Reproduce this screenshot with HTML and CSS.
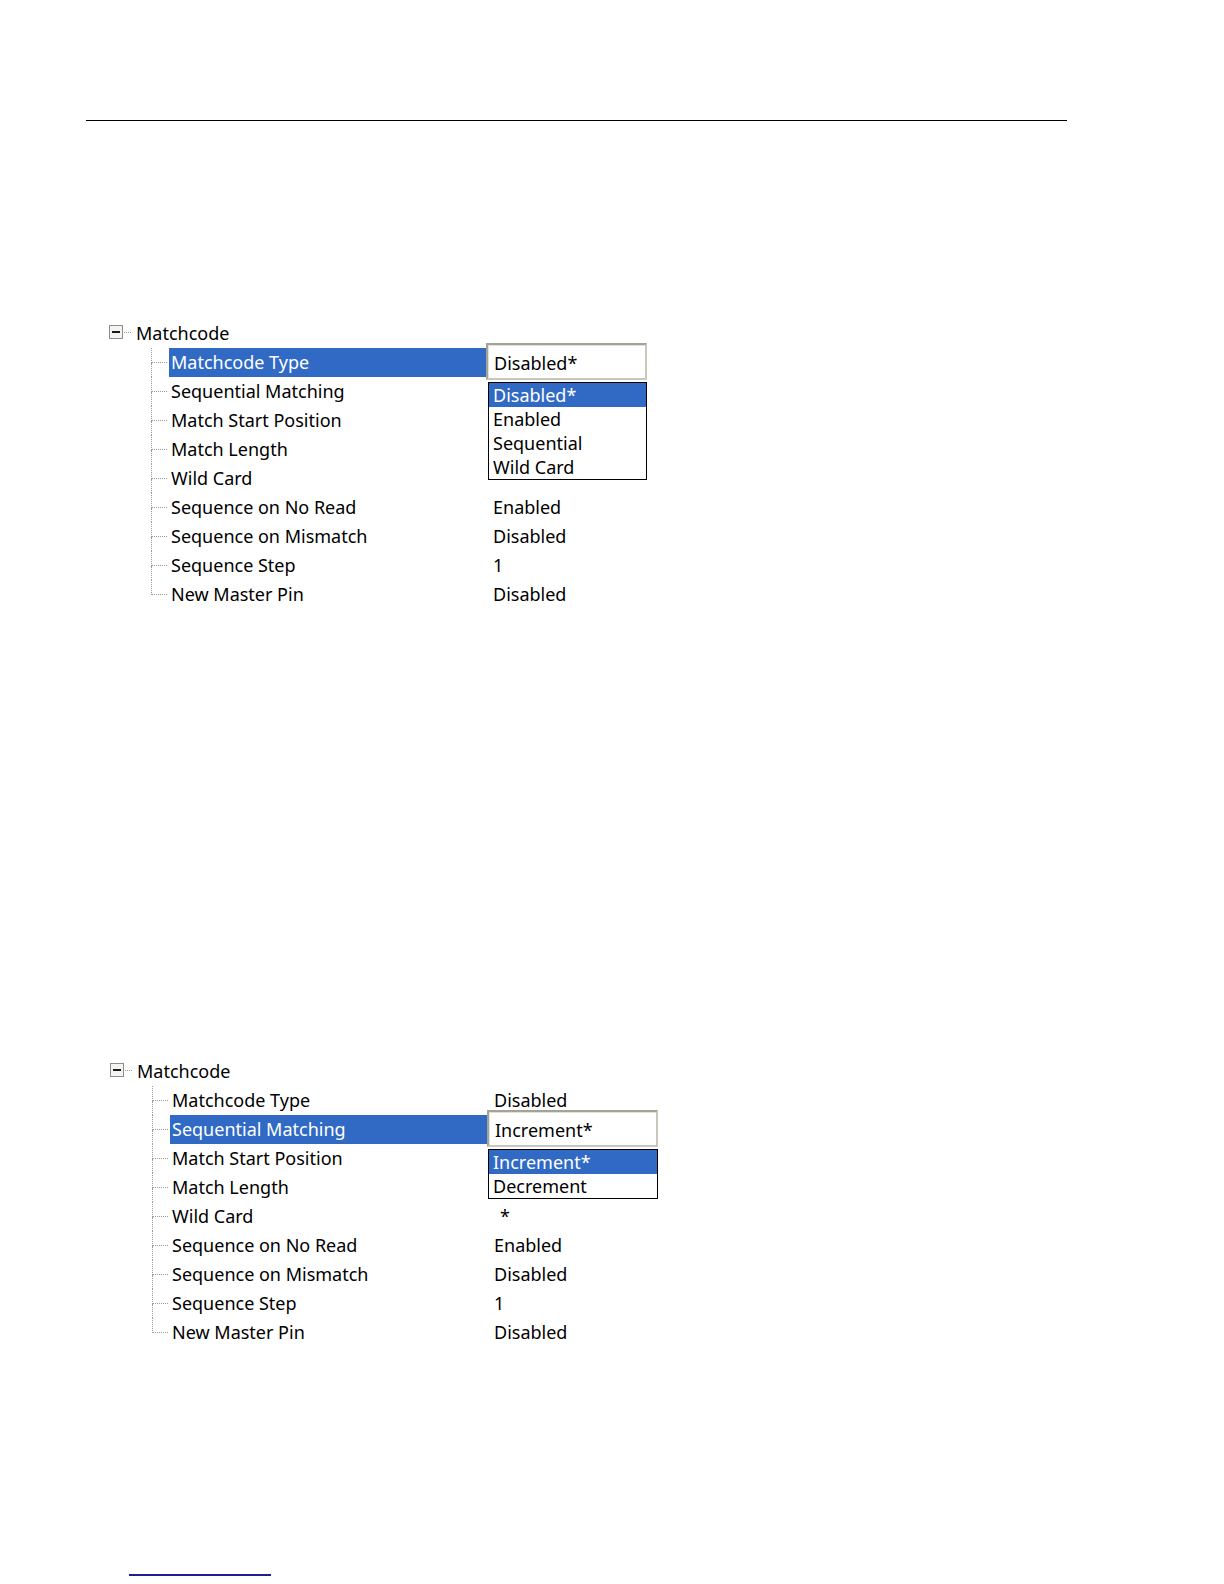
FILE: index.html
```html
<!DOCTYPE html>
<html lang="en">
<head>
<meta charset="utf-8">
<title>Matchcode</title>
<link rel="stylesheet" href="styles.css">
</head>
<body>
<div class="rule"></div>

<div class="tree tree-a">
  <div class="root">
    <div class="toggle"><div class="minus"></div></div>
    <div class="stub"></div>
    <div class="root-label">Matchcode</div>
  </div>
  <div class="row">
    <div class="branch"><div class="b-top"></div><div class="b-bot"></div></div>
    <div class="label selected">Matchcode Type</div>
    <div class="value">
      <div class="combo">Disabled*</div>
      <ul class="list">
        <li class="sel">Disabled*</li>
        <li>Enabled</li>
        <li>Sequential</li>
        <li>Wild Card</li>
      </ul>
    </div>
  </div>
  <div class="row">
    <div class="branch"><div class="b-top"></div><div class="b-bot"></div></div>
    <div class="label">Sequential Matching</div>
    <div class="value"></div>
  </div>
  <div class="row">
    <div class="branch"><div class="b-top"></div><div class="b-bot"></div></div>
    <div class="label">Match Start Position</div>
    <div class="value"></div>
  </div>
  <div class="row">
    <div class="branch"><div class="b-top"></div><div class="b-bot"></div></div>
    <div class="label">Match Length</div>
    <div class="value"></div>
  </div>
  <div class="row">
    <div class="branch"><div class="b-top"></div><div class="b-bot"></div></div>
    <div class="label">Wild Card</div>
    <div class="value"></div>
  </div>
  <div class="row">
    <div class="branch"><div class="b-top"></div><div class="b-bot"></div></div>
    <div class="label">Sequence on No Read</div>
    <div class="value">Enabled</div>
  </div>
  <div class="row">
    <div class="branch"><div class="b-top"></div><div class="b-bot"></div></div>
    <div class="label">Sequence on Mismatch</div>
    <div class="value">Disabled</div>
  </div>
  <div class="row">
    <div class="branch"><div class="b-top"></div><div class="b-bot"></div></div>
    <div class="label">Sequence Step</div>
    <div class="value">1</div>
  </div>
  <div class="row last">
    <div class="branch"><div class="b-top"></div><div class="b-bot"></div></div>
    <div class="label">New Master Pin</div>
    <div class="value">Disabled</div>
  </div>
</div>

<div class="tree tree-b">
  <div class="root">
    <div class="toggle"><div class="minus"></div></div>
    <div class="stub"></div>
    <div class="root-label">Matchcode</div>
  </div>
  <div class="row">
    <div class="branch"><div class="b-top"></div><div class="b-bot"></div></div>
    <div class="label">Matchcode Type</div>
    <div class="value">Disabled</div>
  </div>
  <div class="row">
    <div class="branch"><div class="b-top"></div><div class="b-bot"></div></div>
    <div class="label selected">Sequential Matching</div>
    <div class="value">
      <div class="combo combo-wide">Increment*</div>
      <ul class="list list-wide">
        <li class="sel">Increment*</li>
        <li>Decrement</li>
      </ul>
    </div>
  </div>
  <div class="row">
    <div class="branch"><div class="b-top"></div><div class="b-bot"></div></div>
    <div class="label">Match Start Position</div>
    <div class="value"></div>
  </div>
  <div class="row">
    <div class="branch"><div class="b-top"></div><div class="b-bot"></div></div>
    <div class="label">Match Length</div>
    <div class="value"></div>
  </div>
  <div class="row">
    <div class="branch"><div class="b-top"></div><div class="b-bot"></div></div>
    <div class="label">Wild Card</div>
    <div class="value value-star">*</div>
  </div>
  <div class="row">
    <div class="branch"><div class="b-top"></div><div class="b-bot"></div></div>
    <div class="label">Sequence on No Read</div>
    <div class="value">Enabled</div>
  </div>
  <div class="row">
    <div class="branch"><div class="b-top"></div><div class="b-bot"></div></div>
    <div class="label">Sequence on Mismatch</div>
    <div class="value">Disabled</div>
  </div>
  <div class="row">
    <div class="branch"><div class="b-top"></div><div class="b-bot"></div></div>
    <div class="label">Sequence Step</div>
    <div class="value">1</div>
  </div>
  <div class="row last">
    <div class="branch"><div class="b-top"></div><div class="b-bot"></div></div>
    <div class="label">New Master Pin</div>
    <div class="value">Disabled</div>
  </div>
</div>

<div class="footline"></div>
</body>
</html>
```

FILE: styles.css
```css
* {
  box-sizing: border-box;
}

body {
  margin: 0;
  background: #ffffff;
  color: #000000;
  font-family: "Noto Sans", "DejaVu Sans", sans-serif;
  font-size: 18px;
}

.rule {
  margin: 120px 0 0 86px;
  width: 981px;
  height: 1px;
  background: #000000;
}

.tree {
  display: flex;
  flex-direction: column;
}

.tree-a {
  margin: 198px 0 0 109px;
}

.tree-b {
  margin: 448px 0 0 110px;
}

.root {
  display: flex;
  height: 29px;
}

.toggle {
  margin-top: 6px;
  width: 14px;
  height: 14px;
  border: 1px solid #8c8c8c;
  background: #f4f4f0;
  display: flex;
  align-items: center;
  justify-content: center;
}

.minus {
  width: 8px;
  height: 2px;
  background: #1a1a1a;
}

.stub {
  margin: 13px 0 0 1px;
  width: 7px;
  height: 1px;
  border-top: 1px dotted #9a9a9a;
}

.root-label {
  margin-left: 5px;
  line-height: 29px;
  white-space: nowrap;
}

.row {
  display: flex;
  height: 29px;
  margin-left: 42px;
}

.branch {
  width: 16px;
  margin-right: 2px;
  display: flex;
  flex-direction: column;
}

.b-top {
  height: 15px;
  border-left: 1px dotted #9a9a9a;
  border-bottom: 1px dotted #9a9a9a;
}

.b-bot {
  flex: 1;
  border-left: 1px dotted #9a9a9a;
}

.row.last .b-bot {
  border-left: none;
}

.label {
  width: 317px;
  padding-left: 2px;
  line-height: 29px;
  white-space: nowrap;
}

.label.selected {
  background: #316ac5;
  color: #ffffff;
}

.value {
  position: relative;
  flex: 1;
  padding-left: 7px;
  line-height: 29px;
  white-space: nowrap;
}

.value-star {
  padding-left: 13px;
}

.combo {
  position: absolute;
  left: 0;
  top: -5px;
  width: 161px;
  height: 37px;
  border: 2px solid;
  border-color: #a4a397 #c9c6ba #c9c6ba #a4a397;
  box-shadow: inset 1px 1px 0 #e2e0d6;
  background: #ffffff;
  padding: 3px 0 0 6px;
  line-height: 30px;
  z-index: 2;
}

.combo-wide {
  width: 171px;
}

.list {
  position: absolute;
  left: 2px;
  top: 34px;
  width: 159px;
  margin: 0;
  padding: 0;
  list-style: none;
  border: 1px solid #000000;
  background: #ffffff;
  z-index: 2;
}

.list-wide {
  left: 1px;
  width: 170px;
}

.list li {
  height: 24px;
  line-height: 24px;
  padding-left: 4px;
}

.list li.sel {
  background: #316ac5;
  color: #ffffff;
}

.footline {
  margin: 227px 0 0 129px;
  width: 142px;
  height: 2px;
  background: #1f1f9c;
}
```
